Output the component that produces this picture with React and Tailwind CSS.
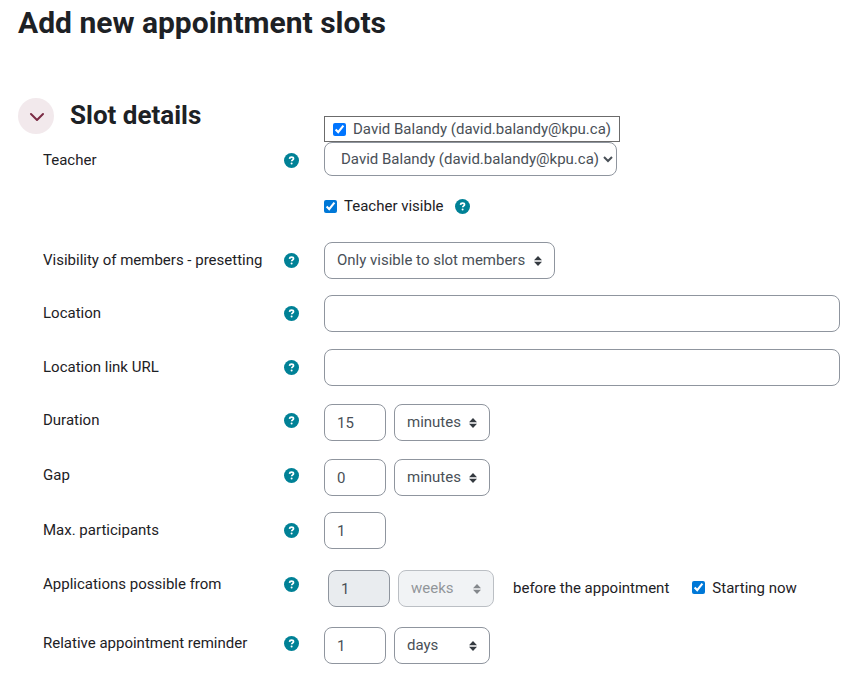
import { useState } from "react";

const fieldBase =
  "h-[37px] rounded-lg border border-[#8f959e] bg-white px-3 text-[15px] text-[#495057]";

const HelpButton = ({ topic }) => (
  <button type="button" aria-label={`Help with ${topic}`} className="shrink-0">
    <svg viewBox="0 0 15 15" className="size-[15px]" fill="none" aria-hidden="true">
      <circle cx="7.5" cy="7.5" r="7.5" fill="#008196" />
      <path d="M5.5 5.9C5.6 4.6 6.4 4.2 7.5 4.2c1.2 0 2 .6 2 1.5 0 1.2-1.8 1.2-1.8 2.6" stroke="#fff" strokeWidth="1.7" />
      <circle cx="7.6" cy="10.4" r="1" fill="#fff" />
    </svg>
  </button>
);

// One line of the form: label and help icon on the left, controls on the right
const FormRow = ({ label, htmlFor, className = "", children }) => (
  <div className="mb-4 flex items-start">
    <div className="flex h-9 w-[281px] shrink-0 items-center justify-between pr-[25px]">
      <label htmlFor={htmlFor}>{label}</label>
      <HelpButton topic={label} />
    </div>
    <div className={`flex min-w-0 flex-1 items-center ${className}`}>{children}</div>
  </div>
);

const TextField = ({ id }) => {
  const [value, setValue] = useState("");
  return (
    <input
      id={id}
      type="text"
      value={value}
      onChange={(e) => setValue(e.target.value)}
      className={`${fieldBase} w-full`}
    />
  );
};

const NumberField = ({ id, initial, disabled }) => {
  const [value, setValue] = useState(initial);
  return (
    <input
      id={id}
      type="text"
      inputMode="numeric"
      value={value}
      disabled={disabled}
      onChange={(e) => setValue(e.target.value)}
      className={`${fieldBase} w-[62px] disabled:bg-[#e9ecef]`}
    />
  );
};

const CustomSelect = ({ id, label, options, initial, disabled, className }) => (
  <div className={`relative ${disabled ? "opacity-60" : ""}`}>
    <select
      id={id}
      aria-label={label}
      defaultValue={initial}
      disabled={disabled}
      className={`${fieldBase} appearance-none pr-7 pb-0.5 disabled:bg-[#e9ecef] ${className}`}
    >
      {options.map((option) => (
        <option key={option}>{option}</option>
      ))}
    </select>
    <svg
      viewBox="0 0 8 10"
      className="pointer-events-none absolute top-1/2 right-[13px] h-[10px] w-2 -translate-y-1/2"
      fill="#343a40"
      aria-hidden="true"
    >
      <path d="M4 0 0 4.2h8zM4 10 0 5.8h8z" />
    </svg>
  </div>
);

const units = ["minutes", "hours", "days", "weeks"];

const App = () => {
  const [open, setOpen] = useState(true);

  return (
    <main className="bg-white pr-4 pl-[18px] font-[Roboto,sans-serif] text-[15px] leading-[22px] text-[#1d2125]">
      <h1 className="pt-[5px] text-[30px] leading-9 font-bold">Add new appointment slots</h1>

      <form className="pt-[57px]">
        <div className="mb-2 flex h-9 items-center gap-4">
          <button
            type="button"
            aria-label="Slot details"
            aria-expanded={open}
            onClick={() => setOpen(!open)}
            className="flex size-9 items-center justify-center rounded-full bg-[#f2e9ec]"
          >
            <svg viewBox="0 0 16 16" className="size-4" fill="none" stroke="#7b2c45" strokeWidth="2" strokeLinecap="round" strokeLinejoin="round">
              <path d="M3 6l6 6 6-6" />
            </svg>
          </button>
          <h2 className="pb-0.5 text-[26px] leading-8 font-bold">Slot details</h2>
        </div>

        {open && (
          <div className="pl-[25px]">
            <FormRow label="Teacher" htmlFor="teacher">
              <div className="relative">
                <label className="absolute bottom-full left-0 flex h-[26px] items-center gap-[7px] border border-[#6b6b6b] bg-white px-2 whitespace-nowrap text-[#495057]">
                  <input type="checkbox" defaultChecked className="size-[13px] accent-[#0075ff]" />
                  David Balandy (david.balandy@kpu.ca)
                </label>
                <select
                  id="teacher"
                  className="h-[34px] rounded-lg border border-[#8f959e] bg-white pl-3 text-[15px] text-[#495057]"
                >
                  <option>David Balandy (david.balandy@kpu.ca)</option>
                </select>
              </div>
            </FormRow>

            <div className="mb-4 flex items-center gap-[11px] pt-px pb-[9px] pl-[281px]">
              <label className="flex items-center gap-[7px]">
                <input type="checkbox" defaultChecked className="size-[13px] accent-[#0078d7]" />
                Teacher visible
              </label>
              <HelpButton topic="Teacher visible" />
            </div>

            <FormRow label="Visibility of members - presetting" htmlFor="visibility">
              <CustomSelect
                id="visibility"
                className="w-[231px]"
                options={["Only visible to slot members", "Visible to everybody"]}
              />
            </FormRow>

            <FormRow label="Location" htmlFor="location" className="pb-px">
              <TextField id="location" />
            </FormRow>

            <FormRow label="Location link URL" htmlFor="location-url">
              <TextField id="location-url" />
            </FormRow>

            <FormRow label="Duration" htmlFor="duration" className="gap-2 pt-0.5">
              <NumberField id="duration" initial="15" />
              <CustomSelect label="Duration unit" className="w-24" options={units} initial="minutes" />
            </FormRow>

            <FormRow label="Gap" htmlFor="gap" className="gap-2 pt-0.5">
              <NumberField id="gap" initial="0" />
              <CustomSelect label="Gap unit" className="w-24" options={units} initial="minutes" />
            </FormRow>

            <FormRow label="Max. participants" htmlFor="participants" className="pb-px">
              <NumberField id="participants" initial="1" />
            </FormRow>

            <FormRow label="Applications possible from" htmlFor="applications" className="gap-2 pt-1 pb-0.5 pl-1">
              <NumberField id="applications" initial="1" disabled />
              <CustomSelect label="Applications unit" className="w-24" options={units} initial="weeks" disabled />
              <span className="ml-[11px] pb-0.5">before the appointment</span>
              <label className="ml-[15px] flex items-center gap-[7px] pb-0.5">
                <input type="checkbox" defaultChecked className="size-[13px] accent-[#0078d7]" />
                Starting now
              </label>
            </FormRow>

            <FormRow label="Relative appointment reminder" htmlFor="reminder" className="gap-2 pt-0.5">
              <NumberField id="reminder" initial="1" />
              <CustomSelect label="Reminder unit" className="w-24" options={units} initial="days" />
            </FormRow>
          </div>
        )}
      </form>
    </main>
  );
};

export default App;
